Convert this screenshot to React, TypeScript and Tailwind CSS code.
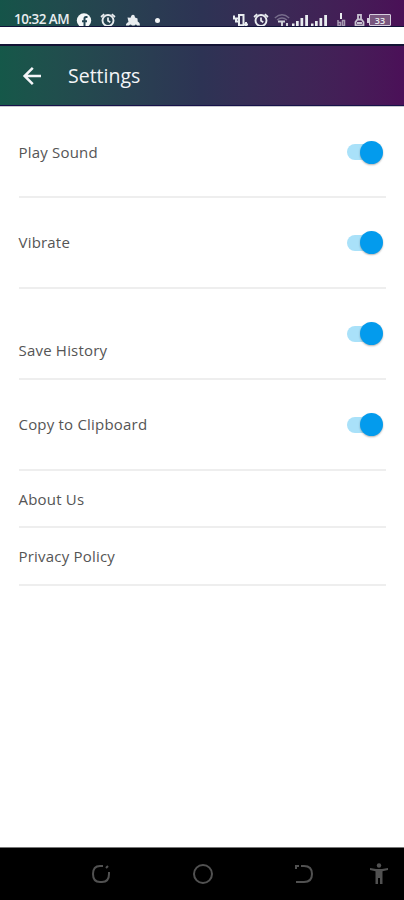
import React from "react";

function StatusBar() {
  return (
    <div className="flex h-[27px] items-start overflow-hidden border-b border-[#101238] bg-linear-to-r from-[#155449] via-[#2d3354] to-[#4a1057] pl-[14px] pr-[13px] text-[#e9edf0]">
      <span className="mt-[13px] w-[62px] whitespace-nowrap font-['Open_Sans',sans-serif] text-[13.5px] leading-[13px] font-semibold tracking-[-0.55px]">
        10:32 AM
      </span>
      <svg className="mt-[13px] h-4 w-4 shrink-0" viewBox="0 0 16 16">
        <circle cx="8" cy="7.5" r="7.2" fill="#f4f7f8" />
        <path d="M11.5 4H10Q8.5 4 8.5 5.5V15M6 8.2h5" fill="none" stroke="#254653" strokeWidth="2" />
      </svg>
      <AlarmIcon className="ml-[8px]" />
      <svg className="ml-[9px] mt-[13px] h-4 w-4 shrink-0" viewBox="0 0 16 16" fill="currentColor">
        <path d="M2.5 4.5l3 .3L6.500 2.500Q8 .8 9.500 2.500L10 4.500l2.500 1 .2 3q2.500 1 2.300 4h-3q-1-2-2.500 0H7q-1.500-2-3 0H1q-.5-2 2.500-3.500z" />
      </svg>
      <i className="ml-[14px] mt-[18px] h-[5px] w-[5px] shrink-0 rounded-full bg-[#f2f4f6]" />
      <div className="ml-auto flex items-start">
        <svg className="mt-[13px] h-4 w-4" viewBox="0 0 16 16" fill="none" stroke="currentColor" strokeWidth="2">
          <path d="M6 2h4.500v10.200H6zM1 2.500v3h4M3 5v3.500h3M11 11.500h4M13 9v4" />
        </svg>
        <AlarmIcon className="ml-[4px]" />
        <svg className="ml-[5px] mt-[13px] h-4 w-4" viewBox="0 0 16 16" fill="none" stroke="currentColor">
          <path d="M.8 5Q8-1.5 15.200 5M3 7q5-4 10 0" strokeWidth="1.300" opacity=".35" />
          <path d="M4 8.500h7M8 8v5M13 10v3.500" strokeWidth="2" opacity=".85" />
        </svg>
        <Signal />
        <Signal />
        <svg className="ml-[7px] mt-[12px] h-4 w-[12px]" viewBox="0 0 12 16" fill="none" stroke="currentColor">
          <path d="M6 1v6" strokeWidth="2" />
          <path d="M3 8v5.500h2.500v-3H3M7.500 8.500h2v5h-2z" strokeWidth="1.500" opacity=".6" />
        </svg>
        <svg className="ml-[7px] mt-[13px] h-4 w-[11px]" viewBox="0 0 11 16" fill="none" stroke="currentColor" strokeWidth="1.8" opacity=".8">
          <path d="M4 1.800h3v4L9.500 9v3.500h-8V9L4 5.800zM4 6.500h3M3 10h5" />
        </svg>
        <div className="ml-[2px] mt-[14px] flex h-[12px] w-[24px] items-center">
          <i className="h-[5px] w-[2px] bg-[#d5cddd]" />
          <div className="flex h-[12px] w-[22px] items-center justify-center rounded-[1px] border-[1.5px] border-[#d5cddd] bg-[#79577f] font-['Open_Sans',sans-serif] text-[9px] leading-none font-semibold">
            33
          </div>
        </div>
      </div>
    </div>
  );
}

function AlarmIcon({ className = "" }: { className?: string }) {
  return (
    <svg className={`mt-[13px] h-4 w-4 shrink-0 ${className}`} viewBox="0 0 16 16" fill="none" stroke="currentColor">
      <circle cx="8" cy="7.5" r="5.5" strokeWidth="1.9" />
      <path d="M8 4.5v3.3l2.3 1.5M1 4l3.2-2.8M15 4l-3.2-2.8" strokeWidth="1.7" />
    </svg>
  );
}

function Signal() {
  return (
    <svg className="ml-px mt-[13px] h-4 w-[18px]" viewBox="0 0 18 16" fill="currentColor">
      <path d="M1 10.5h2.5V14H1zM5 8h2.7v6H5zM9.5 5h2.7v9H9.5zM14.2 2H17v12h-2.8z" />
    </svg>
  );
}

function Toggle() {
  return (
    <button aria-pressed="true" className="flex h-[23px] w-[36px] items-center rounded-full">
      <span className="h-[16px] w-[30px] rounded-full bg-[#a9e1f9]" />
      <span className="-ml-[17px] h-[23px] w-[23px] shrink-0 rounded-full bg-[#039bed] shadow-[0_1px_2px_rgba(0,0,0,0.3)]" />
    </button>
  );
}

function Label({ children }: { children: React.ReactNode }) {
  return <span className="text-[15px] leading-5 tracking-[0.2px]">{children}</span>;
}

export default function App() {
  return (
    <div className="flex h-[900px] w-[404px] flex-col overflow-hidden bg-white font-['Open_Sans',sans-serif] text-[#555555]">
      <StatusBar />
      <header className="mt-[17px] flex h-[62px] shrink-0 items-center border-t-2 border-b border-t-[#131334] border-b-[#171249] bg-linear-to-r from-[#155849] via-[#2d3354] to-[#4b1058] pt-px pl-[22px] text-[#f4f5f8] shadow-[0_1px_0_#c9c9cf]">
        <svg className="h-5 w-5" viewBox="0 0 20 20" fill="none" stroke="currentColor" strokeWidth="2.5">
          <path d="M19 10H2.8M10.8 1.8L2.6 10l8.2 8.2" />
        </svg>
        <h1 className="ml-[26px] text-[19.5px] leading-7 font-normal">Settings</h1>
      </header>
      <main className="flex grow flex-col pt-[2px] pr-[18px] pl-[18.5px]">
        <div className="flex h-[90px] items-center justify-between border-b-2 border-[#eeeeee] pr-[3px]">
          <Label>Play Sound</Label><Toggle />
        </div>
        <div className="flex h-[91px] items-center justify-between border-b-2 border-[#eeeeee] pr-[3px]">
          <span className="pb-px"><Label>Vibrate</Label></span><Toggle />
        </div>
        <div className="flex h-[91px] items-center justify-between border-b-2 border-[#eeeeee] pr-[3px]">
          <span className="pt-[32px]"><Label>Save History</Label></span><Toggle />
        </div>
        <div className="flex h-[91px] items-center justify-between border-b-2 border-[#eeeeee] pr-[3px]">
          <span className="pb-px"><Label>Copy to Clipboard</Label></span><Toggle />
        </div>
        <div className="flex h-[57px] items-center border-b-2 border-[#eeeeee]"><Label>About Us</Label></div>
        <div className="flex h-[58px] items-center border-b-2 border-[#eeeeee]"><Label>Privacy Policy</Label></div>
      </main>
      <nav className="flex h-[53px] shrink-0 items-center border-t border-[#777777] bg-black pl-[91px] text-[#515151]">
        <svg className="h-5 w-5" viewBox="0 0 20 20" fill="none" stroke="currentColor" strokeWidth="2">
          <path d="M12 2H9Q2 2 2 10t7 8h2q7 0 7-8V8M15 4l2-2" />
        </svg>
        <svg className="ml-[81px] h-[22px] w-[22px]" viewBox="0 0 22 22" fill="none" stroke="currentColor" strokeWidth="2">
          <circle cx="11" cy="11" r="9" />
        </svg>
        <svg className="ml-[80px] h-5 w-5" viewBox="0 0 20 20" fill="none" stroke="currentColor" strokeWidth="2">
          <path d="M2 5V2h3M7 2h3q8 0 8 8t-8 8H2" />
        </svg>
        <svg className="ml-[55px] h-[22px] w-5" viewBox="0 0 20 22" fill="currentColor">
          <circle cx="10" cy="2.5" r="2.2" />
          <path d="M1 5l6 1h6l6-1v2l-5.500 1.200V21h-2.500v-6H9v6H6.500V8.200L1 7z" />
        </svg>
      </nav>
    </div>
  );
}
